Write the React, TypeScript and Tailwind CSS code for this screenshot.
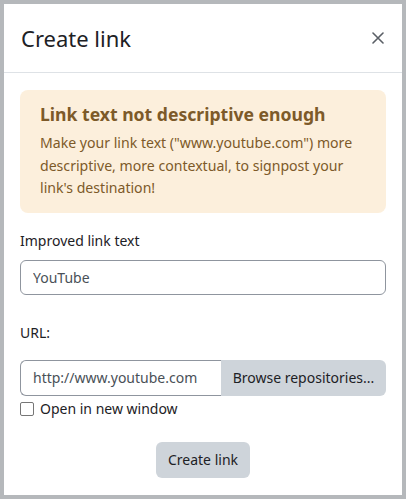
import React from "react";

const App: React.FC = () => {
  return (
    <div
      className="h-[499px] w-[406px] bg-[#b5b8bb] pt-[4px] pl-[4px] pr-[4px]"
      style={{ fontFamily: '"Noto Sans", "Open Sans", sans-serif' }}
    >
      <div className="flex h-[491px] w-[398px] flex-col bg-white text-[#1d2125]">
        <div className="flex h-[69px] items-center justify-between border-b border-[#dee2e6] pl-[17px] pr-[18px]">
          <h1 className="text-[22px] leading-none">Create link</h1>
          <button className="text-[#5a5f66]">
            <svg width="12" height="12" viewBox="0 0 12 12" fill="none" stroke="currentColor" strokeWidth="1.6" strokeLinecap="round">
              <path d="M1 1l10 10M11 1L1 11" />
            </svg>
          </button>
        </div>
        <div className="px-[16px] pt-[17px]">
          <div className="rounded-[8px] bg-[#fcefdc] px-[20px] pt-[12px] pb-[13px] text-[#7d5a29]">
            <h2 className="text-[17.6px] font-bold leading-[24px]">
              Link text not descriptive enough
            </h2>
            <p className="mt-[6px] text-[14.1px] leading-[22.5px]">
              Make your link text ("www.youtube.com") more descriptive, more
              contextual, to signpost your link's destination!
            </p>
          </div>
          <label className="mt-[17px] block text-[14px] leading-[22px]">
            Improved link text
          </label>
          <input
            type="text"
            defaultValue="YouTube"
            className="mt-[8px] h-[35px] w-full rounded-[6px] border border-[#8f959e] px-[12px] text-[14px] text-[#495057] outline-none"
          />
          <label className="mt-[27px] block text-[14px] leading-[22px]">
            URL:
          </label>
          <div className="mt-[16px] flex h-[36px] w-full">
            <input
              type="text"
              defaultValue="http://www.youtube.com"
              className="h-full w-[201px] rounded-l-[6px] border border-r-0 border-[#8f959e] px-[12px] text-[14px] text-[#495057] outline-none"
            />
            <button className="h-full flex-1 rounded-r-[6px] bg-[#ced4da] text-[14px] text-[#1d2125]">
              Browse repositories...
            </button>
          </div>
          <label className="mt-[2px] flex items-center gap-[6px] text-[14px] leading-[22px]">
            <span className="inline-block h-[14px] w-[14px] rounded-[2px] border border-[#767676] bg-white" />
            Open in new window
          </label>
          <div className="mt-[22px] flex justify-center">
            <button className="h-[36px] rounded-[6px] bg-[#ced4da] px-[12px] text-[14px] text-[#1d2125]">
              Create link
            </button>
          </div>
        </div>
      </div>
    </div>
  );
};

export default App;
